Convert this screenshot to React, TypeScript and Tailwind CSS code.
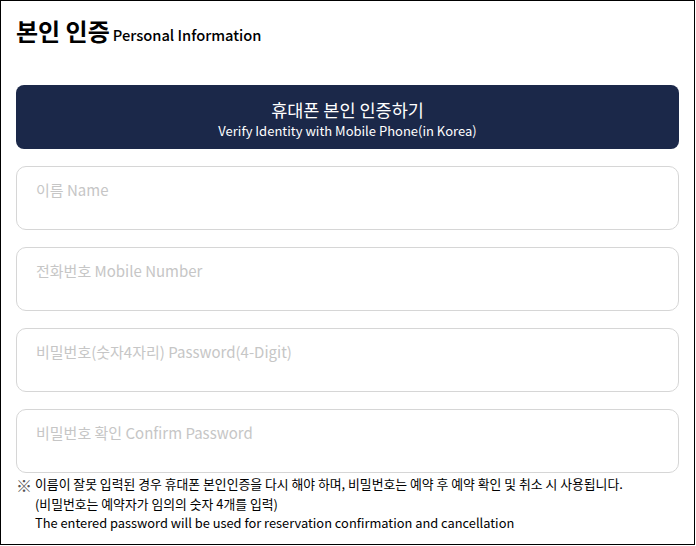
const fields = [
  "이름 Name",
  "전화번호 Mobile Number",
  "비밀번호(숫자4자리) Password(4-Digit)",
  "비밀번호 확인 Confirm Password",
];

const App = () => {
  return (
    <div className="w-[695px] h-[545px] border border-black bg-white px-[15px] font-['Noto_Sans_CJK_KR','Noto_Sans',sans-serif] text-black">
      <div className="flex flex-row items-baseline gap-[3px] pt-[13px] h-[84px]">
        <h1 className="text-[24px] font-bold leading-[34px]">본인 인증</h1>
        <span className="text-[14.7px] font-medium">Personal Information</span>
      </div>
      <button className="flex flex-col items-center justify-center w-full h-[64px] pt-[4px] rounded-[8px] bg-[#1b2849] text-white">
        <span className="text-[17.5px] font-normal leading-[23px]">휴대폰 본인 인증하기</span>
        <span className="text-[13px] leading-[20px]">
          Verify Identity with Mobile Phone(in Korea)
        </span>
      </button>
      <div className="flex flex-col gap-[17px] mt-[17px]">
        {fields.map((f, index) => (
          <div
            key={index}
            className="w-full h-[64px] rounded-[10px] border border-[#d6d6d6] px-[19px] pt-[11px] text-[15px] leading-[24px] text-[#c6c6c6]"
          >
            {f}
          </div>
        ))}
      </div>
      <div className="flex flex-row mt-[1px] text-[12.85px] font-normal leading-[19.5px]">
        <span className="w-[20px] text-[16px] font-normal text-[#555] leading-[22px]">※</span>
        <div className="-ml-[1px]">
          <p>
            이름이 잘못 입력된 경우 휴대폰 본인인증을 다시 해야 하며, 비밀번호는 예약 후 예약 확인 및 취소 시 사용됩니다.
          </p>
          <p>(비밀번호는 예약자가 임의의 숫자 4개를 입력)</p>
          <p>The entered password will be used for reservation confirmation and cancellation</p>
        </div>
      </div>
    </div>
  );
};

export default App;
